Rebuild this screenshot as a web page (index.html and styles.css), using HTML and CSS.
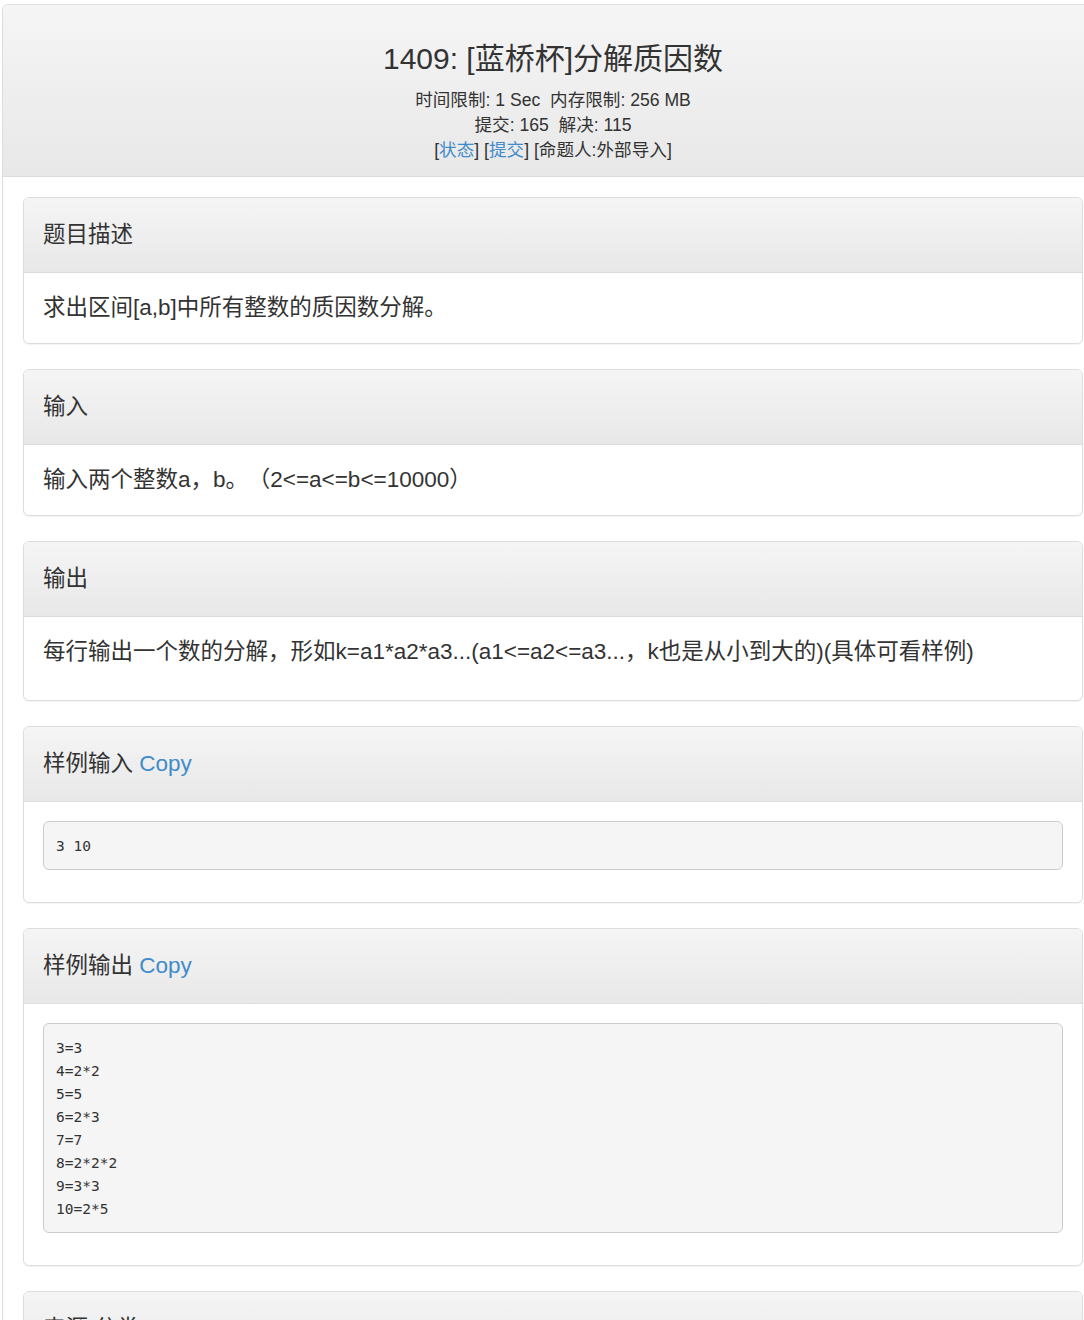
FILE: index.html
```html
<!DOCTYPE html>
<html lang="zh-CN">
<head>
<meta charset="utf-8">
<title>1409: [蓝桥杯]分解质因数</title>
<link rel="stylesheet" href="styles.css">
</head>
<body>
<div class="page">
  <div class="main-panel">
    <div class="main-heading">
      <h1 class="title">1409: [蓝桥杯]分解质因数</h1>
      <div class="meta">
        <div>时间限制: 1 Sec&nbsp;&nbsp;内存限制: 256 MB</div>
        <div>提交: 165&nbsp;&nbsp;解决: 115</div>
        <div>[<a class="link" href="#">状态</a>] [<a class="link" href="#">提交</a>] [命题人:外部导入]</div>
      </div>
    </div>
    <div class="main-body">
      <div class="panel">
        <div class="panel-heading">题目描述</div>
        <div class="panel-body">求出区间[a,b]中所有整数的质因数分解。</div>
      </div>
      <div class="panel">
        <div class="panel-heading">输入</div>
        <div class="panel-body">输入两个整数a，b。<span class="gap">（2&lt;=a&lt;=b&lt;=10000）</span></div>
      </div>
      <div class="panel">
        <div class="panel-heading">输出</div>
        <div class="panel-body panel-body-tall">每行输出一个数的分解，形如k=a1*a2*a3...(a1&lt;=a2&lt;=a3...，k也是从小到大的)(具体可看样例)</div>
      </div>
      <div class="panel">
        <div class="panel-heading">样例输入 <a class="link" href="#">Copy</a></div>
        <div class="panel-body"><pre class="code">3 10</pre></div>
      </div>
      <div class="panel">
        <div class="panel-heading">样例输出 <a class="link" href="#">Copy</a></div>
        <div class="panel-body"><pre class="code">3=3
4=2*2
5=5
6=2*3
7=7
8=2*2*2
9=3*3
10=2*5</pre></div>
      </div>
      <div class="panel">
        <div class="panel-heading">来源/分类</div>
        <div class="panel-body">&nbsp;</div>
      </div>
    </div>
  </div>
</div>
</body>
</html>
```

FILE: styles.css
```css
html {
  overflow-x: hidden;
}
body {
  margin: 0;
  background: #fff;
  color: #333;
  font-family: "Liberation Sans", "Noto Sans CJK SC", sans-serif;
}
.page {
  padding: 4px 0 0 2px;
}
.main-panel {
  width: 1100px;
  border: 1px solid #ddd;
  border-radius: 6px 6px 0 0;
  background: #fff;
}
.main-heading {
  background: linear-gradient(to bottom, #f5f5f5 0%, #e8e8e8 100%);
  border-bottom: 1px solid #ddd;
  text-align: center;
  padding: 37px 0 13px;
  border-radius: 6px 6px 0 0;
}
.title {
  margin: 0 0 13px;
  font-size: 30px;
  line-height: 33px;
  font-weight: normal;
  color: #333;
}
.meta {
  font-size: 17.6px;
  line-height: 25px;
  color: #333;
}
.link {
  color: #428bca;
  text-decoration: none;
}
.main-body {
  padding: 20px;
}
.panel {
  border: 1px solid #ddd;
  border-radius: 6px;
  margin-bottom: 25px;
  box-shadow: 0 1px 1px rgba(0, 0, 0, 0.05);
  background: #fff;
}
.panel-heading {
  background: linear-gradient(to bottom, #f5f5f5 0%, #e8e8e8 100%);
  border-bottom: 1px solid #ddd;
  border-radius: 5px 5px 0 0;
  padding: 19px 19px;
  font-size: 22.5px;
  line-height: 36px;
}
.panel-body {
  padding: 19px 19px;
  font-size: 22.5px;
  line-height: 32px;
}
.panel-body-tall {
  padding-bottom: 32px;
}
.gap {
  margin-left: 11px;
}
.code {
  margin: 0 0 13px;
  padding: 13px 12px 11px;
  background: #f5f5f5;
  border: 1px solid #ccc;
  border-radius: 6px;
  font-family: "DejaVu Sans Mono", "Liberation Mono", monospace;
  font-size: 14.5px;
  line-height: 23px;
  color: #333;
  white-space: pre;
}
```
